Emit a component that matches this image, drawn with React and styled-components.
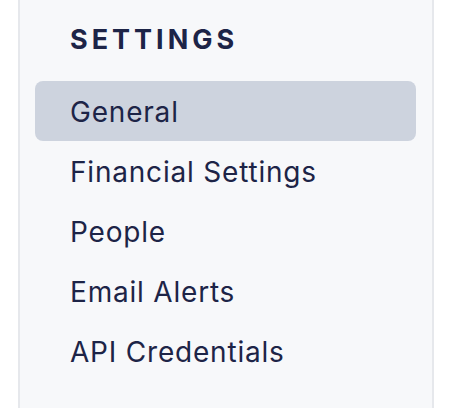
import React from 'react';
import styled, { createGlobalStyle } from 'styled-components';

const GlobalStyle = createGlobalStyle`
  html, body {
    margin: 0;
    padding: 0;
    background: #ffffff;
    overflow: hidden;
  }
  body {
    font-family: Inter, 'Noto Sans', sans-serif;
    -webkit-font-smoothing: antialiased;
  }
`;

const Page = styled.div`
  padding-left: 18px;
  width: 416px;
  height: 408px;
  overflow: hidden;
`;

const Sidebar = styled.nav`
  box-sizing: border-box;
  height: 100%;
  background: #f7f8fa;
  border-left: 2px solid #e6e8ec;
  border-right: 2px solid #e6e8ec;
  padding: 0 16px 0 15px;
`;

const Heading = styled.h2`
  margin: 0;
  padding: 26px 0 0 35px;
  height: 81px;
  box-sizing: border-box;
  font-size: 27px;
  line-height: 27px;
  font-weight: 700;
  letter-spacing: 4px;
  color: #1d2447;
  text-transform: uppercase;
`;

const List = styled.ul`
  list-style: none;
  margin: 0;
  padding: 0;
`;

const Item = styled.li`
  box-sizing: border-box;
  height: 60px;
  display: flex;
  align-items: center;
  padding: 2px 0 0 35px;
  border-radius: 8px;
  font-size: 28px;
  letter-spacing: 0.8px;
  color: #1d2447;
  background: ${({ $active }) => ($active ? '#cdd3de' : 'transparent')};
  cursor: pointer;
`;

const items = ['General', 'Financial Settings', 'People', 'Email Alerts', 'API Credentials'];

export default function App() {
  return (
    <>
      <GlobalStyle />
      <Page>
        <Sidebar>
          <Heading>Settings</Heading>
          <List>
            {items.map((label, i) => (
              <Item key={label} $active={i === 0}>
                {label}
              </Item>
            ))}
          </List>
        </Sidebar>
      </Page>
    </>
  );
}
